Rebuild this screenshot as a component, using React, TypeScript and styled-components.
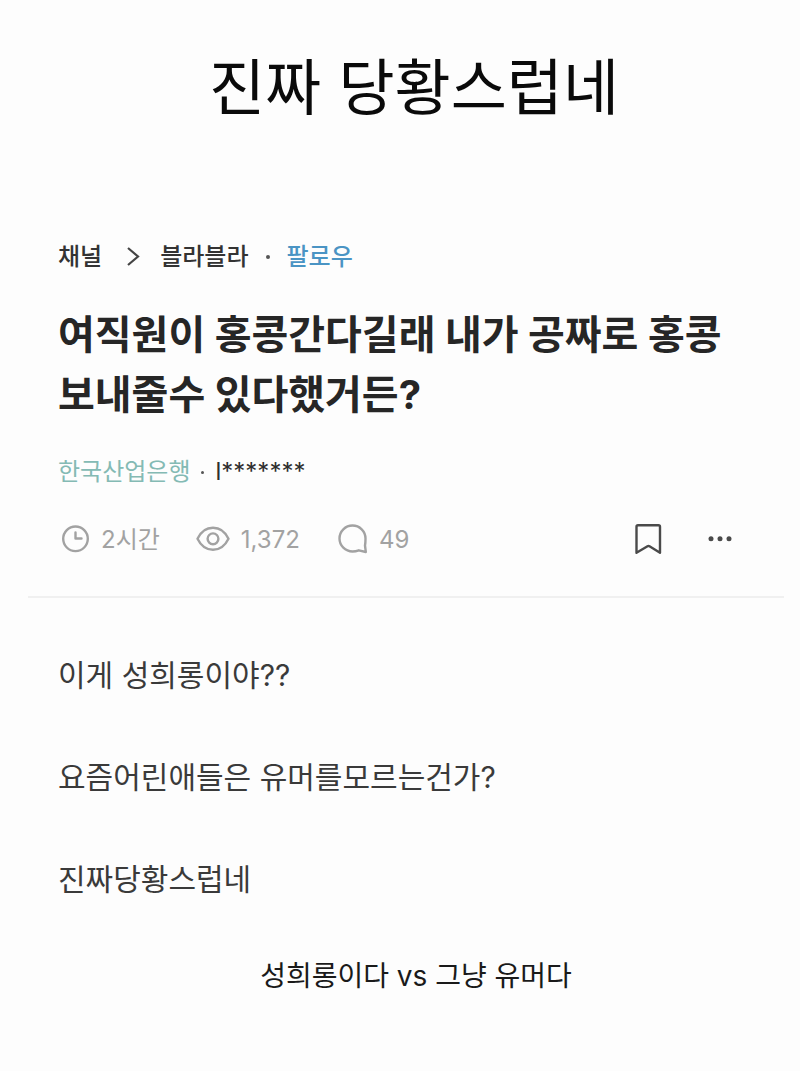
import styled, { createGlobalStyle } from "styled-components";

const GlobalStyle = createGlobalStyle`
  * { box-sizing: border-box; }
  body {
    margin: 0;
    background: #fdfdfd;
    color: #2e2e2e;
    font-family: Inter, "Noto Sans CJK KR", sans-serif;
  }
`;

const Page = styled.main`
  display: flex;
  flex-direction: column;
  padding: 44px 16px 64px 28px;
`;

const Title = styled.h1`
  margin: 0;
  padding-left: 16px;
  text-align: center;
  font-size: 61px;
  line-height: 88px;
  font-weight: 400;
  color: #0a0a0a;
`;

const Post = styled.article`
  display: flex;
  flex-direction: column;
  margin-top: 107px;
`;

const PostHeader = styled.header`
  display: flex;
  flex-direction: column;
  padding: 0 30px 38px;
  border-bottom: 2px solid #f0f0f0;
`;

const Breadcrumb = styled.nav`
  display: flex;
  align-items: center;
  font-size: 24px;
  line-height: 36px;
  font-weight: 500;
`;

const Crumb = styled.a`
  color: #333;
  text-decoration: none;
`;

const Chevron = styled.svg`
  width: 14px;
  height: 20px;
  margin: 0 20px 0 24px;
`;

const Dot = styled.span`
  width: 4px;
  height: 4px;
  margin: 0 17px;
  border-radius: 50%;
  background: #555;
`;

const FollowButton = styled.button`
  padding: 0;
  border: 0;
  background: none;
  font: inherit;
  color: #4a94c4;
  cursor: pointer;
`;

const Heading = styled.h2`
  margin: 30px 0 0;
  font-size: 40px;
  line-height: 60px;
  font-weight: 700;
  color: #262626;
  word-break: keep-all;
`;

const Author = styled.div`
  display: flex;
  align-items: center;
  margin-top: 29px;
  font-size: 24px;
  line-height: 36px;
`;

const Company = styled.a`
  color: #84bab4;
  text-decoration: none;
`;

const SmallDot = styled.span`
  width: 3px;
  height: 3px;
  margin: 0 11px;
  border-radius: 50%;
  background: #555;
`;

const MetaRow = styled.div`
  display: flex;
  align-items: center;
  justify-content: space-between;
  margin-top: 32px;
  padding-right: 20px;
`;

const Stats = styled.div`
  display: flex;
  gap: 36px;
`;

const Stat = styled.span`
  display: flex;
  align-items: center;
  gap: 11px;
  font-size: 24px;
  line-height: 36px;
  color: #a2a2a2;
`;

const Icon = styled.svg<{ $width: number }>`
  width: ${(p) => p.$width}px;
  height: 32px;
  fill: none;
  stroke: currentColor;
  stroke-width: 2.4;
  stroke-linecap: round;
  stroke-linejoin: round;
`;

const Actions = styled.div`
  display: flex;
  gap: 42px;
`;

const IconButton = styled.button`
  display: flex;
  padding: 0;
  border: 0;
  background: none;
  color: #4a4a4a;
  cursor: pointer;
`;

const Body = styled.div`
  display: flex;
  flex-direction: column;
  gap: 58px;
  padding: 55px 30px 0;
`;

const Paragraph = styled.p`
  margin: 0;
  font-size: 30px;
  line-height: 44px;
  color: #3a3a3a;
`;

const Caption = styled.p`
  margin: 53px 0 0;
  padding-left: 20px;
  text-align: center;
  font-size: 28px;
  line-height: 44px;
  color: #1a1a1a;
`;

export default function App() {
  return (
    <>
      <GlobalStyle />
      <Page>
        <Title>진짜 당황스럽네</Title>
        <Post>
          <PostHeader>
            <Breadcrumb>
              <Crumb href="#">채널</Crumb>
              <Chevron viewBox="0 0 14 20" fill="none" stroke="#444" strokeWidth="2.2" aria-hidden="true">
                <path d="M2 1 12 9.500 2 18" />
              </Chevron>
              <Crumb href="#">블라블라</Crumb>
              <Dot />
              <FollowButton type="button">팔로우</FollowButton>
            </Breadcrumb>
            <Heading>여직원이 홍콩간다길래 내가 공짜로 홍콩 보내줄수 있다했거든?</Heading>
            <Author>
              <Company href="#">한국산업은행</Company>
              <SmallDot />
              <span>l*******</span>
            </Author>
            <MetaRow>
              <Stats>
                <Stat>
                  <Icon $width={32} viewBox="0 0 32 32" aria-hidden="true">
                    <circle cx="17.500" cy="14.800" r="12.300" />
                    <path d="M17.500 8.500V14.500H23.500" />
                  </Icon>
                  2시간
                </Stat>
                <Stat>
                  <Icon $width={34} viewBox="0 0 34 32" aria-hidden="true">
                    <path d="M1.500 14.800C5 7.500 10.500 3.800 17 3.800S29 7.500 32.500 14.800C29 22 23.500 25.800 17 25.800S5 22 1.500 14.800Z" />
                    <circle cx="17" cy="14.800" r="5.400" />
                  </Icon>
                  1,372
                </Stat>
                <Stat>
                  <Icon $width={32} viewBox="0 0 32 32" aria-hidden="true">
                    <path d="M29.500 14.500A13 13 0 1 0 16.500 27.500C19 27.500 21 27 22.800 26.300L29.800 28 29 21.500C29.400 19.500 29.500 17 29.500 14.500Z" />
                  </Icon>
                  49
                </Stat>
              </Stats>
              <Actions>
                <IconButton type="button" aria-label="북마크">
                  <Icon $width={32} viewBox="0 0 32 32" aria-hidden="true">
                    <path d="M6 1.200H26.500Q28 1.200 28 2.700V28.800L17.500 22.300Q16.500 21.700 15.500 22.300L4.500 28.800V2.700Q4.500 1.200 6 1.200Z" />
                  </Icon>
                </IconButton>
                <IconButton type="button" aria-label="더보기">
                  <Icon $width={28} viewBox="0 0 28 32" aria-hidden="true">
                    <g fill="currentColor" stroke="none">
                      <circle cx="5" cy="14.800" r="2.500" />
                      <circle cx="14" cy="14.800" r="2.500" />
                      <circle cx="23" cy="14.800" r="2.500" />
                    </g>
                  </Icon>
                </IconButton>
              </Actions>
            </MetaRow>
          </PostHeader>
          <Body>
            <Paragraph>이게 성희롱이야??</Paragraph>
            <Paragraph>요즘어린애들은 유머를모르는건가?</Paragraph>
            <Paragraph>진짜당황스럽네</Paragraph>
          </Body>
        </Post>
        <Caption>성희롱이다 vs 그냥 유머다</Caption>
      </Page>
    </>
  );
}
